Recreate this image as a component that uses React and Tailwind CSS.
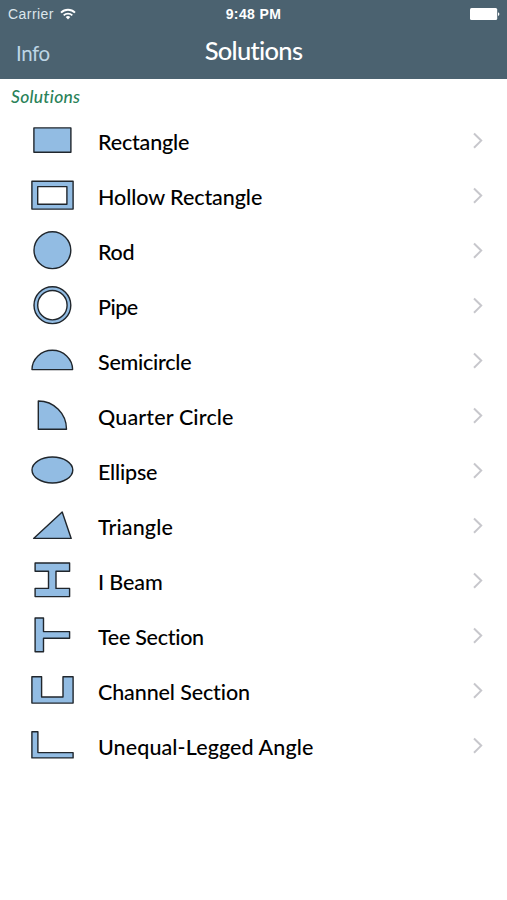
import React from 'react';

const solutions = [
  { name: 'Rectangle', tracking: 'tracking-[-0.17px]', shape: <rect x="33.9" y="13.9" width="37" height="24.4" /> },
  {
    name: 'Hollow Rectangle',
    tracking: 'tracking-[-0.08px]',
    shape: (
      <>
        <rect x="31.9" y="12.2" width="41.2" height="27.9" />
        <rect x="37.7" y="17.6" width="29.2" height="17.6" fill="#fff" />
      </>
    ),
  },
  { name: 'Rod', tracking: 'tracking-[-0.25px]', shape: <circle cx="52.4" cy="26.2" r="18.4" /> },
  {
    name: 'Pipe',
    tracking: 'tracking-[-0.47px]',
    shape: (
      <>
        <circle cx="52.4" cy="26.2" r="18.4" />
        <circle cx="52.4" cy="26.2" r="14.7" fill="#fff" />
      </>
    ),
  },
  { name: 'Semicircle', tracking: 'tracking-[-0.25px]', shape: <path d="M32 35.6a20.3 19.4 0 0 1 40.6 0z" /> },
  { name: 'Quarter Circle', tracking: 'tracking-[0.15px]', shape: <path d="M38.3 12a28.2 28.2 0 0 1 28.2 28.2H38.3z" /> },
  { name: 'Ellipse', tracking: 'tracking-[-0.2px]', shape: <ellipse cx="52.4" cy="26" rx="20.4" ry="13" /> },
  { name: 'Triangle', tracking: 'tracking-[0.1px]', shape: <path d="M62.2 13 33.6 39.4h37.6z" /> },
  {
    name: 'I Beam',
    tracking: 'tracking-[-0.1px]',
    shape: <path d="M35.1 9h34.5v8.2H56v17.2h13.6v8.2H35.1v-8.2h13.4V17.2H35.1z" />,
  },
  {
    name: 'Tee Section',
    tracking: 'tracking-[-0.28px]',
    shape: <path d="M35.1 9h8.4v13.6h26.1v6.6H43.5v13.6h-8.4z" />,
  },
  {
    name: 'Channel Section',
    tracking: 'tracking-[-0.12px]',
    shape: <path d="M31.9 12.7h9.7V33H63V12.7h10.1v26.4H31.9z" />,
  },
  {
    name: 'Unequal-Legged Angle',
    tracking: 'tracking-[0.1px]',
    shape: <path d="M31.9 12.7h6V33.6h35.2v5.3H31.9z" />,
  },
];

const StatusBar = () => (
  <div className="relative flex h-7 items-center justify-between pl-2 pr-[7px] font-['Liberation_Sans',sans-serif] text-white">
    <div className="flex items-center gap-[6px] text-[14px] tracking-[0.45px] text-[#dce6ec]">
      <span>Carrier</span>
      <svg width="16" height="12" viewBox="0 0 16 12" fill="none" stroke="#fff" strokeWidth="1.9">
        <path d="M1 4.6a10 10 0 0 1 14 0" />
        <path d="M3.7 7.4a6.1 6.1 0 0 1 8.6 0" />
        <path d="M8 11.4 5.7 9.1a3.3 3.3 0 0 1 4.6 0z" fill="#fff" stroke="none" />
      </svg>
    </div>
    <span className="absolute inset-x-0 text-center text-[14px] font-bold tracking-[0.4px]">9:48 PM</span>
    <svg width="30" height="12" viewBox="0 0 30 12" fill="#fff">
      <rect width="27.2" height="12" rx="1.5" />
      <path d="M28 4.2a2 2 0 0 1 0 3.8z" />
    </svg>
  </div>
);

const SolutionRow = ({ item }) => (
  <li className="flex h-[55px] items-center">
    <svg
      className="h-[55px] w-[98px] shrink-0"
      viewBox="0 0 98 55"
      fill="#92bce3"
      stroke="#20262c"
      strokeWidth="1.4"
      strokeLinejoin="round"
    >
      {item.shape}
    </svg>
    <span className={`flex-1 whitespace-nowrap pt-0.5 text-[21.5px] font-medium text-black ${item.tracking}`}>{item.name}</span>
    <svg className="mr-[23px] mb-[2px]" width="12" height="18" viewBox="0 0 12 18" fill="none" stroke="#c7c7cc" strokeWidth="2">
      <path d="M2 1.5 9.2 8.6 2 15.7" />
    </svg>
  </li>
);

const App = () => {
  return (
    <div className="h-[900px] w-full overflow-hidden bg-white font-['Lato',sans-serif]">
      <header className="h-[79px] bg-[#4b6270]">
        <StatusBar />
        <div className="grid h-[46px] grid-cols-3 items-center">
          <button className="pl-4 pt-1 text-left text-[20.5px] tracking-[-0.4px] text-[#bdd5e5]">Info</button>
          <h1 className="pb-0.5 text-center text-[25.5px] font-medium tracking-[-0.7px] text-white">Solutions</h1>
        </div>
      </header>

      <h2 className="flex h-[35px] items-center pl-[11px] pt-0.5 text-[17.5px] font-medium italic tracking-[0.25px] text-[#2a8259]">
        Solutions
      </h2>

      <ul>
        {solutions.map((item) => (
          <SolutionRow key={item.name} item={item} />
        ))}
      </ul>
    </div>
  );
};

export default App;
